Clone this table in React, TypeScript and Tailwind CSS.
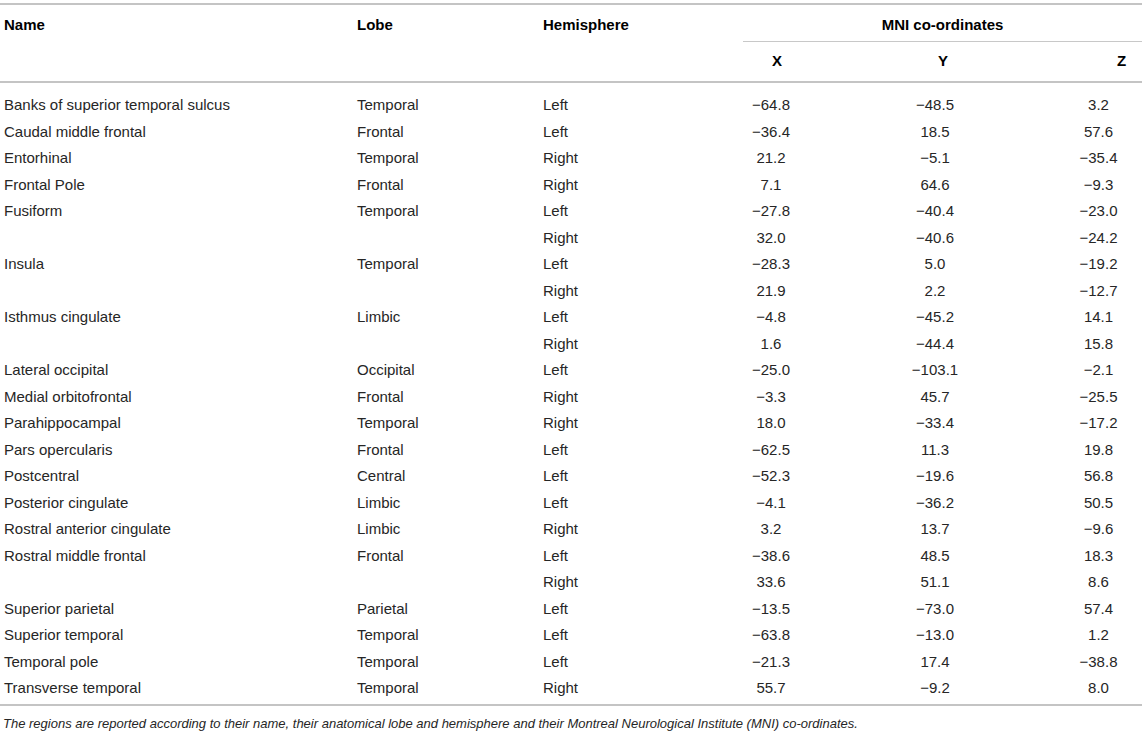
import React from 'react';

type Row = { name: string; lobe: string; hemi: string; x: string; y: string; z: string };

const rows: Row[] = [
  { name: 'Banks of superior temporal sulcus', lobe: 'Temporal', hemi: 'Left', x: '−64.8', y: '−48.5', z: '3.2' },
  { name: 'Caudal middle frontal', lobe: 'Frontal', hemi: 'Left', x: '−36.4', y: '18.5', z: '57.6' },
  { name: 'Entorhinal', lobe: 'Temporal', hemi: 'Right', x: '21.2', y: '−5.1', z: '−35.4' },
  { name: 'Frontal Pole', lobe: 'Frontal', hemi: 'Right', x: '7.1', y: '64.6', z: '−9.3' },
  { name: 'Fusiform', lobe: 'Temporal', hemi: 'Left', x: '−27.8', y: '−40.4', z: '−23.0' },
  { name: '', lobe: '', hemi: 'Right', x: '32.0', y: '−40.6', z: '−24.2' },
  { name: 'Insula', lobe: 'Temporal', hemi: 'Left', x: '−28.3', y: '5.0', z: '−19.2' },
  { name: '', lobe: '', hemi: 'Right', x: '21.9', y: '2.2', z: '−12.7' },
  { name: 'Isthmus cingulate', lobe: 'Limbic', hemi: 'Left', x: '−4.8', y: '−45.2', z: '14.1' },
  { name: '', lobe: '', hemi: 'Right', x: '1.6', y: '−44.4', z: '15.8' },
  { name: 'Lateral occipital', lobe: 'Occipital', hemi: 'Left', x: '−25.0', y: '−103.1', z: '−2.1' },
  { name: 'Medial orbitofrontal', lobe: 'Frontal', hemi: 'Right', x: '−3.3', y: '45.7', z: '−25.5' },
  { name: 'Parahippocampal', lobe: 'Temporal', hemi: 'Right', x: '18.0', y: '−33.4', z: '−17.2' },
  { name: 'Pars opercularis', lobe: 'Frontal', hemi: 'Left', x: '−62.5', y: '11.3', z: '19.8' },
  { name: 'Postcentral', lobe: 'Central', hemi: 'Left', x: '−52.3', y: '−19.6', z: '56.8' },
  { name: 'Posterior cingulate', lobe: 'Limbic', hemi: 'Left', x: '−4.1', y: '−36.2', z: '50.5' },
  { name: 'Rostral anterior cingulate', lobe: 'Limbic', hemi: 'Right', x: '3.2', y: '13.7', z: '−9.6' },
  { name: 'Rostral middle frontal', lobe: 'Frontal', hemi: 'Left', x: '−38.6', y: '48.5', z: '18.3' },
  { name: '', lobe: '', hemi: 'Right', x: '33.6', y: '51.1', z: '8.6' },
  { name: 'Superior parietal', lobe: 'Parietal', hemi: 'Left', x: '−13.5', y: '−73.0', z: '57.4' },
  { name: 'Superior temporal', lobe: 'Temporal', hemi: 'Left', x: '−63.8', y: '−13.0', z: '1.2' },
  { name: 'Temporal pole', lobe: 'Temporal', hemi: 'Left', x: '−21.3', y: '17.4', z: '−38.8' },
  { name: 'Transverse temporal', lobe: 'Temporal', hemi: 'Right', x: '55.7', y: '−9.2', z: '8.0' },
];

// column widths: name | lobe | hemisphere | X | Y | Z
const cols = 'grid grid-cols-[357px_186px_200px_68px_264px_67px]';

export default function App() {
  return (
    <div className="w-[1145px] h-[736px] bg-white text-[#262626] font-['Liberation_Sans',Arial,sans-serif] text-[15px] overflow-hidden">
      <div className="w-[1142px] pt-[3px]">
        <div className="border-t-2 border-[#c4c4c4]" />

        <div className={`${cols} font-bold text-black`}>
          <div className="row-span-2 pl-[4px] pt-[9px]">Name</div>
          <div className="row-span-2 pt-[9px]">Lobe</div>
          <div className="row-span-2 pt-[9px]">Hemisphere</div>
          <div className="col-span-3 h-[37px] pt-[9px] text-center border-b border-[#c8c8c8]">
            MNI co-ordinates
          </div>
          <div className="h-[39px] pt-[8px] text-center">X</div>
          <div className="pt-[8px] text-center">Y</div>
          <div className="pt-[8px] pl-[26px] text-center">Z</div>
        </div>

        <div className="border-t-2 border-[#c4c4c4]" />

        <div className="pt-[9px] pb-[2px]">
          {rows.map((r, i) => (
            <div key={i} className={`${cols} h-[26.5px] items-center`}>
              <div className="pl-[4px]">{r.name}</div>
              <div>{r.lobe}</div>
              <div>{r.hemi}</div>
              <div className="pr-[12px] text-center">{r.x}</div>
              <div className="pr-[16px] text-center">{r.y}</div>
              <div className="pr-[20px] text-center">{r.z}</div>
            </div>
          ))}
        </div>

        <div className="border-t-2 border-[#c4c4c4]" />

        <p className="pl-[3px] pt-[8px] text-[13px] italic">
          The regions are reported according to their name, their anatomical lobe and hemisphere and their Montreal
          Neurological Institute (MNI) co-ordinates.
        </p>
      </div>
    </div>
  );
}
